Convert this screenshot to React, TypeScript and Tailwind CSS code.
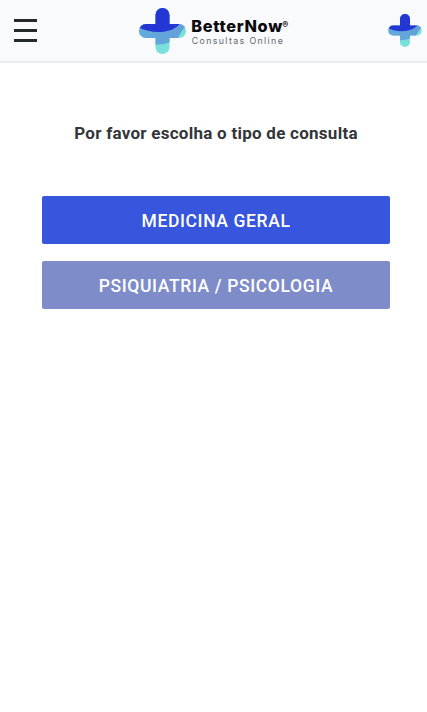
import React from 'react';
import { clsx } from 'clsx';

interface ConsultationType {
  id: string;
  label: string;
  primary: boolean;
}

const consultationTypes: ConsultationType[] = [
  { id: 'geral', label: 'Medicina Geral', primary: true },
  { id: 'psi', label: 'Psiquiatria / Psicologia', primary: false },
];

function CrossLogo({ id, className }: { id: string; className?: string }) {
  return (
    <svg viewBox="0 0 47 46" className={className} aria-hidden="true">
      <defs>
        <clipPath id={id}>
          <rect x="16.5" y="0" width="14" height="46" rx="7" />
          <rect x="0" y="16" width="47" height="14" rx="7" />
        </clipPath>
        <linearGradient id={`${id}-mid`} x1="0" y1="0" x2="1" y2="0">
          <stop offset="0" stopColor="#62abdc" />
          <stop offset="1" stopColor="#649fd8" />
        </linearGradient>
      </defs>
      <g clipPath={`url(#${id})`}>
        <rect width="47" height="46" fill="#7ae0dc" />
        <path d="M0 0H47V18.5C45 20 42 24 39 30C33 34.5 25 36.5 16 36.8L0 36Z" fill={`url(#${id}-mid)`} />
        <path d="M0 0H41V15.5C34 25.5 13 26.5 0 19.5Z" fill="#2437d4" />
      </g>
    </svg>
  );
}

function Header() {
  return (
    <header className="flex h-[63px] items-start justify-between border-b-2 border-[#e9ebee] bg-[#f8fafc]">
      <button className="mt-[19px] ml-[14px] flex w-[23px] flex-col gap-[7px]" aria-label="Menu">
        <span className="h-[3px] w-full bg-[#26292b]" />
        <span className="h-[3px] w-full bg-[#26292b]" />
        <span className="h-[3px] w-full bg-[#26292b]" />
      </button>

      <div className="mt-[7.5px] ml-[3px] flex">
        <CrossLogo id="brand" className="h-[46px] w-[47px]" />
        <svg viewBox="0 0 104 46" className="h-[46px] w-[104px]">
          <text x="5.2" y="23.7" textLength="91" fontFamily="Inter, sans-serif" fontSize="16.3" fontWeight="800" fill="#0b0b0d">
            BetterNow
          </text>
          <text x="96.3" y="19.5" fontFamily="Inter, sans-serif" fontSize="9" fontWeight="800" fill="#222">
            ®
          </text>
          <text x="5.8" y="35.8" textLength="91" fontFamily="Inter, sans-serif" fontSize="8.8" fill="#66676c">
            Consultas Online
          </text>
        </svg>
      </div>

      <CrossLogo id="profile" className="mt-[14px] mr-[5px] h-[33px] w-[34px]" />
    </header>
  );
}

export default function App() {
  return (
    <div className="min-h-screen bg-white font-['Roboto',sans-serif]">
      <Header />
      <main className="pr-[37px] pl-[42px] pt-[58px]">
        <h1 className="text-center text-[17px] leading-6 font-bold tracking-[0.26px] text-[#333639]">
          Por favor escolha o tipo de consulta
        </h1>
        <div className="mt-[51px] flex flex-col gap-[17px]">
          {consultationTypes.map((type) => (
            <button
              key={type.id}
              className={clsx(
                'h-12 w-full rounded-[2px] pt-0.5 text-[17.5px] font-medium tracking-[0.62px] text-white uppercase',
                type.primary ? 'bg-[#3755dd]' : 'bg-[#7e8cc9]'
              )}
            >
              {type.label}
            </button>
          ))}
        </div>
      </main>
    </div>
  );
}
